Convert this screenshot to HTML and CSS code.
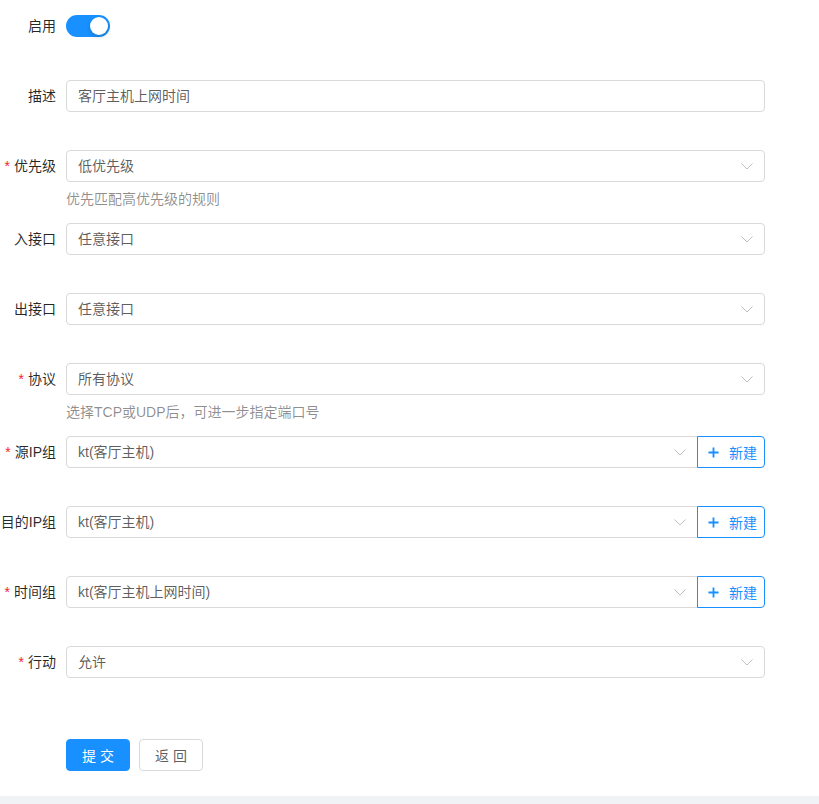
FILE: index.html
```html
<!DOCTYPE html>
<html lang="zh-CN">
<head>
<meta charset="utf-8">
<title>规则</title>
<link rel="stylesheet" href="styles.css">
</head>
<body>
<div class="page">
  <form class="form">
    <div class="item item-switch">
      <label class="label">启用</label>
      <div class="control">
        <span class="switch"><span class="knob"></span></span>
      </div>
    </div>

    <div class="item">
      <label class="label">描述</label>
      <div class="control">
        <div class="input">客厅主机上网时间</div>
      </div>
    </div>

    <div class="item has-help">
      <label class="label"><span class="req">*</span>优先级</label>
      <div class="control">
        <div class="select"><span>低优先级</span><svg class="arrow" viewBox="0 0 12 7"><path d="M0.5 0.5 L6 6 L11.5 0.5" fill="none" stroke="#bfbfbf" stroke-width="1"/></svg></div>
        <div class="help">优先匹配高优先级的规则</div>
      </div>
    </div>

    <div class="item">
      <label class="label">入接口</label>
      <div class="control">
        <div class="select"><span>任意接口</span><svg class="arrow" viewBox="0 0 12 7"><path d="M0.5 0.5 L6 6 L11.5 0.5" fill="none" stroke="#bfbfbf" stroke-width="1"/></svg></div>
      </div>
    </div>

    <div class="item">
      <label class="label">出接口</label>
      <div class="control">
        <div class="select"><span>任意接口</span><svg class="arrow" viewBox="0 0 12 7"><path d="M0.5 0.5 L6 6 L11.5 0.5" fill="none" stroke="#bfbfbf" stroke-width="1"/></svg></div>
      </div>
    </div>

    <div class="item has-help">
      <label class="label"><span class="req">*</span>协议</label>
      <div class="control">
        <div class="select"><span>所有协议</span><svg class="arrow" viewBox="0 0 12 7"><path d="M0.5 0.5 L6 6 L11.5 0.5" fill="none" stroke="#bfbfbf" stroke-width="1"/></svg></div>
        <div class="help">选择TCP或UDP后，可进一步指定端口号</div>
      </div>
    </div>

    <div class="item">
      <label class="label"><span class="req">*</span>源IP组</label>
      <div class="control group">
        <div class="select"><span>kt(客厅主机)</span><svg class="arrow" viewBox="0 0 12 7"><path d="M0.5 0.5 L6 6 L11.5 0.5" fill="none" stroke="#bfbfbf" stroke-width="1"/></svg></div>
        <button type="button" class="btn-new"><svg class="plus" viewBox="0 0 12 12"><path d="M6 0.5 V11.5 M0.5 6 H11.5" stroke="#1890ff" stroke-width="2"/></svg>新建</button>
      </div>
    </div>

    <div class="item">
      <label class="label">目的IP组</label>
      <div class="control group">
        <div class="select"><span>kt(客厅主机)</span><svg class="arrow" viewBox="0 0 12 7"><path d="M0.5 0.5 L6 6 L11.5 0.5" fill="none" stroke="#bfbfbf" stroke-width="1"/></svg></div>
        <button type="button" class="btn-new"><svg class="plus" viewBox="0 0 12 12"><path d="M6 0.5 V11.5 M0.5 6 H11.5" stroke="#1890ff" stroke-width="2"/></svg>新建</button>
      </div>
    </div>

    <div class="item">
      <label class="label"><span class="req">*</span>时间组</label>
      <div class="control group">
        <div class="select"><span>kt(客厅主机上网时间)</span><svg class="arrow" viewBox="0 0 12 7"><path d="M0.5 0.5 L6 6 L11.5 0.5" fill="none" stroke="#bfbfbf" stroke-width="1"/></svg></div>
        <button type="button" class="btn-new"><svg class="plus" viewBox="0 0 12 12"><path d="M6 0.5 V11.5 M0.5 6 H11.5" stroke="#1890ff" stroke-width="2"/></svg>新建</button>
      </div>
    </div>

    <div class="item item-last">
      <label class="label"><span class="req">*</span>行动</label>
      <div class="control">
        <div class="select"><span>允许</span><svg class="arrow" viewBox="0 0 12 7"><path d="M0.5 0.5 L6 6 L11.5 0.5" fill="none" stroke="#bfbfbf" stroke-width="1"/></svg></div>
      </div>
    </div>

    <div class="actions">
      <button type="button" class="btn btn-primary">提 交</button>
      <button type="button" class="btn btn-default">返 回</button>
    </div>
  </form>
</div>
</body>
</html>
```

FILE: styles.css
```css
* { box-sizing: border-box; }

html, body {
  margin: 0;
  padding: 0;
}

body {
  background: #f0f2f5;
  font-family: "Liberation Sans", "Noto Sans CJK SC", sans-serif;
  font-size: 14px;
  color: rgba(0, 0, 0, 0.65);
}

.page {
  background: #fff;
  height: 796px;
  overflow: hidden;
}

.form {
  padding-top: 10px;
  width: 765px;
}

.item {
  display: flex;
  align-items: flex-start;
  margin-bottom: 38px;
}

.item.has-help {
  margin-bottom: 13px;
}

.item-last {
  margin-bottom: 61px;
}

.label {
  flex: 0 0 56px;
  width: 56px;
  height: 32px;
  line-height: 32px;
  display: flex;
  justify-content: flex-end;
  align-items: center;
  white-space: nowrap;
  color: rgba(0, 0, 0, 0.85);
  margin-right: 10px;
}

.req {
  color: #f5222d;
  margin-right: 4px;
  font-family: "Liberation Sans", sans-serif;
}

.control {
  flex: 1;
  min-width: 0;
}

.control.group {
  display: flex;
}

.switch {
  display: inline-block;
  position: relative;
  width: 44px;
  height: 22px;
  border-radius: 11px;
  background: #1890ff;
  margin-top: 5px;
  vertical-align: top;
}

.knob {
  position: absolute;
  top: 2px;
  left: 24px;
  width: 18px;
  height: 18px;
  border-radius: 50%;
  background: #fff;
  box-shadow: 0 2px 4px rgba(0, 35, 11, 0.2);
}

.input,
.select {
  height: 32px;
  line-height: 30px;
  border: 1px solid #d9d9d9;
  border-radius: 4px;
  padding: 0 11px;
  background: #fff;
  color: rgba(0, 0, 0, 0.65);
  white-space: nowrap;
}

.select {
  display: flex;
  align-items: center;
  justify-content: space-between;
}

.group .select {
  flex: 1;
  border-radius: 4px 0 0 4px;
}

.arrow {
  width: 12px;
  height: 7px;
  display: block;
}

.help {
  color: rgba(0, 0, 0, 0.45);
  line-height: 22px;
  padding-top: 6px;
}

.btn-new {
  flex: 0 0 68px;
  width: 68px;
  height: 32px;
  margin-left: -1px;
  border: 1px solid #1890ff;
  border-radius: 0 4px 4px 0;
  background: #fff;
  color: #1890ff;
  font-family: inherit;
  font-size: 14px;
  padding: 0 0 0 10px;
  display: flex;
  align-items: center;
  position: relative;
}

.plus {
  width: 11px;
  height: 11px;
  margin-right: 10px;
  display: block;
}

.actions {
  display: flex;
  gap: 9px;
  padding-left: 66px;
}

.btn {
  width: 64px;
  height: 32px;
  border-radius: 4px;
  font-family: inherit;
  font-size: 14px;
  padding: 0;
  cursor: pointer;
}

.btn-primary {
  background: #1890ff;
  border: 1px solid #1890ff;
  color: #fff;
}

.btn-default {
  background: #fff;
  border: 1px solid #d9d9d9;
  color: rgba(0, 0, 0, 0.65);
}
```
